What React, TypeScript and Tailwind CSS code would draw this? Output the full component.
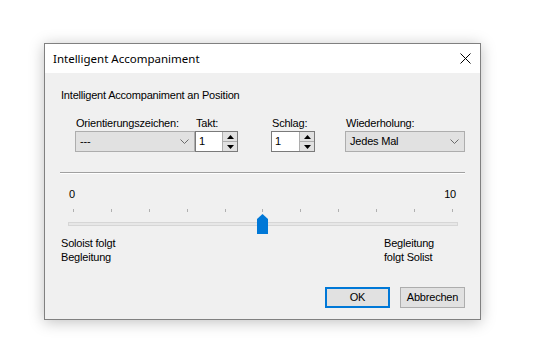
import React from "react";

const Chevron = () => (
  <svg width="9" height="5" viewBox="0 0 9 5" className="block">
    <path d="M0.5 0.5 L4.5 4.5 L8.5 0.5" fill="none" stroke="#6a6a6a" strokeWidth="1" />
  </svg>
);

const Combo = ({ text }: { text: string }) => (
  <div className="h-[21px] w-full border border-[#adadad] bg-[#e1e1e1] flex items-center justify-between pl-[4px] pr-[5px]">
    <span>{text}</span>
    <Chevron />
  </div>
);

const Spin = ({ value }: { value: string }) => (
  <div className="h-[21px] w-full border border-[#7a7a7a] bg-white flex">
    <div className="flex-1 pl-[3px] flex items-center">{value}</div>
    <div className="w-[15px] flex flex-col border-l border-[#adadad]">
      <div className="flex-1 bg-[#e1e1e1] border-b border-[#adadad] flex items-center justify-center">
        <svg width="7" height="4" viewBox="0 0 7 4" className="block">
          <path d="M3.5 0 L7 4 L0 4 Z" fill="#000" />
        </svg>
      </div>
      <div className="flex-1 bg-[#e1e1e1] flex items-center justify-center">
        <svg width="7" height="4" viewBox="0 0 7 4" className="block">
          <path d="M0 0 L7 0 L3.5 4 Z" fill="#000" />
        </svg>
      </div>
    </div>
  </div>
);

export default function App() {
  const ticks = Array.from({ length: 11 }, (_, i) => i);
  return (
    <div className="w-[537px] h-[361px] bg-white overflow-hidden pt-[43px] pl-[44px]">
      <div className="w-[437px] h-[277px] border border-[#808080] bg-[#f0f0f0] shadow-[0_2px_14px_rgba(0,0,0,0.25)] flex flex-col">
        <div className="h-[29px] bg-white flex items-center justify-between pl-[8px] pr-[9px] shrink-0">
          <span className="text-[11.5px] text-black font-['Noto_Sans',sans-serif] leading-[16px]">
            Intelligent Accompaniment
          </span>
          <svg width="11" height="11" viewBox="0 0 11 11" className="block">
            <path d="M0.5 0.5 L10.5 10.5 M10.5 0.5 L0.5 10.5" stroke="#000" strokeWidth="1" fill="none" />
          </svg>
        </div>
        <div className="flex-1 flex flex-col text-[11px] leading-[13px] tracking-[-0.2px] text-black font-['Liberation_Sans',Arial,sans-serif]">
          <div className="mt-[16px] pl-[16px]">Intelligent Accompaniment an Position</div>
          <div className="mt-[15px] flex">
            <div className="ml-[30px] w-[120px] flex flex-col">
              <span className="h-[13px] pl-[1px]">Orientierungszeichen:</span>
              <div className="mt-[1px]"><Combo text="---" /></div>
            </div>
            <div className="w-[43px] flex flex-col">
              <span className="h-[13px] pl-[1px]">Takt:</span>
              <div className="mt-[1px]"><Spin value="1" /></div>
            </div>
            <div className="ml-[33px] w-[44px] flex flex-col">
              <span className="h-[13px] pl-[1px]">Schlag:</span>
              <div className="mt-[1px]"><Spin value="1" /></div>
            </div>
            <div className="ml-[30px] w-[120px] flex flex-col">
              <span className="h-[13px] pl-[1px]">Wiederholung:</span>
              <div className="mt-[1px]"><Combo text="Jedes Mal" /></div>
            </div>
          </div>
          <div className="mt-[20px] ml-[15px] w-[405px] h-[2px] border-t border-[#a0a0a0] bg-white" />
          <div className="mt-[14px] ml-[24px] w-[387px] flex justify-between">
            <span>0</span>
            <span>10</span>
          </div>
          <div className="mt-[3px] ml-[23px] w-[390px] h-[30px] relative">
            <div className="absolute left-[5px] right-[5px] top-[5px] h-[3px] flex justify-between">
              {ticks.map((t) => (
                <div key={t} className="w-[1px] h-[3px] bg-[#b0b0b0]" />
              ))}
            </div>
            <div className="absolute left-0 right-0 top-[18px] h-[4px] border border-[#d6d6d6] bg-[#e7e7e7]" />
            <svg
              width="11"
              height="20"
              viewBox="0 0 11 20"
              className="absolute left-[189px] top-[10px] block"
            >
              <path d="M5.5 0 L11 5 L11 20 L0 20 L0 5 Z" fill="#0078d7" />
            </svg>
          </div>
          <div className="mt-[2px] flex justify-between leading-[14px]">
            <div className="pl-[16px] flex flex-col">
              <span>Soloist folgt</span>
              <span>Begleitung</span>
            </div>
            <div className="w-[96px] flex flex-col">
              <span>Begleitung</span>
              <span>folgt Solist</span>
            </div>
          </div>
          <div className="mt-[23px] flex justify-end gap-[10px] pr-[15px]">
            <div className="w-[65px] h-[21px] border-2 border-[#0078d7] bg-[#e1e1e1] flex items-center justify-center">
              OK
            </div>
            <div className="w-[65px] h-[21px] border border-[#adadad] bg-[#e1e1e1] flex items-center justify-center">
              Abbrechen
            </div>
          </div>
        </div>
      </div>
    </div>
  );
}
